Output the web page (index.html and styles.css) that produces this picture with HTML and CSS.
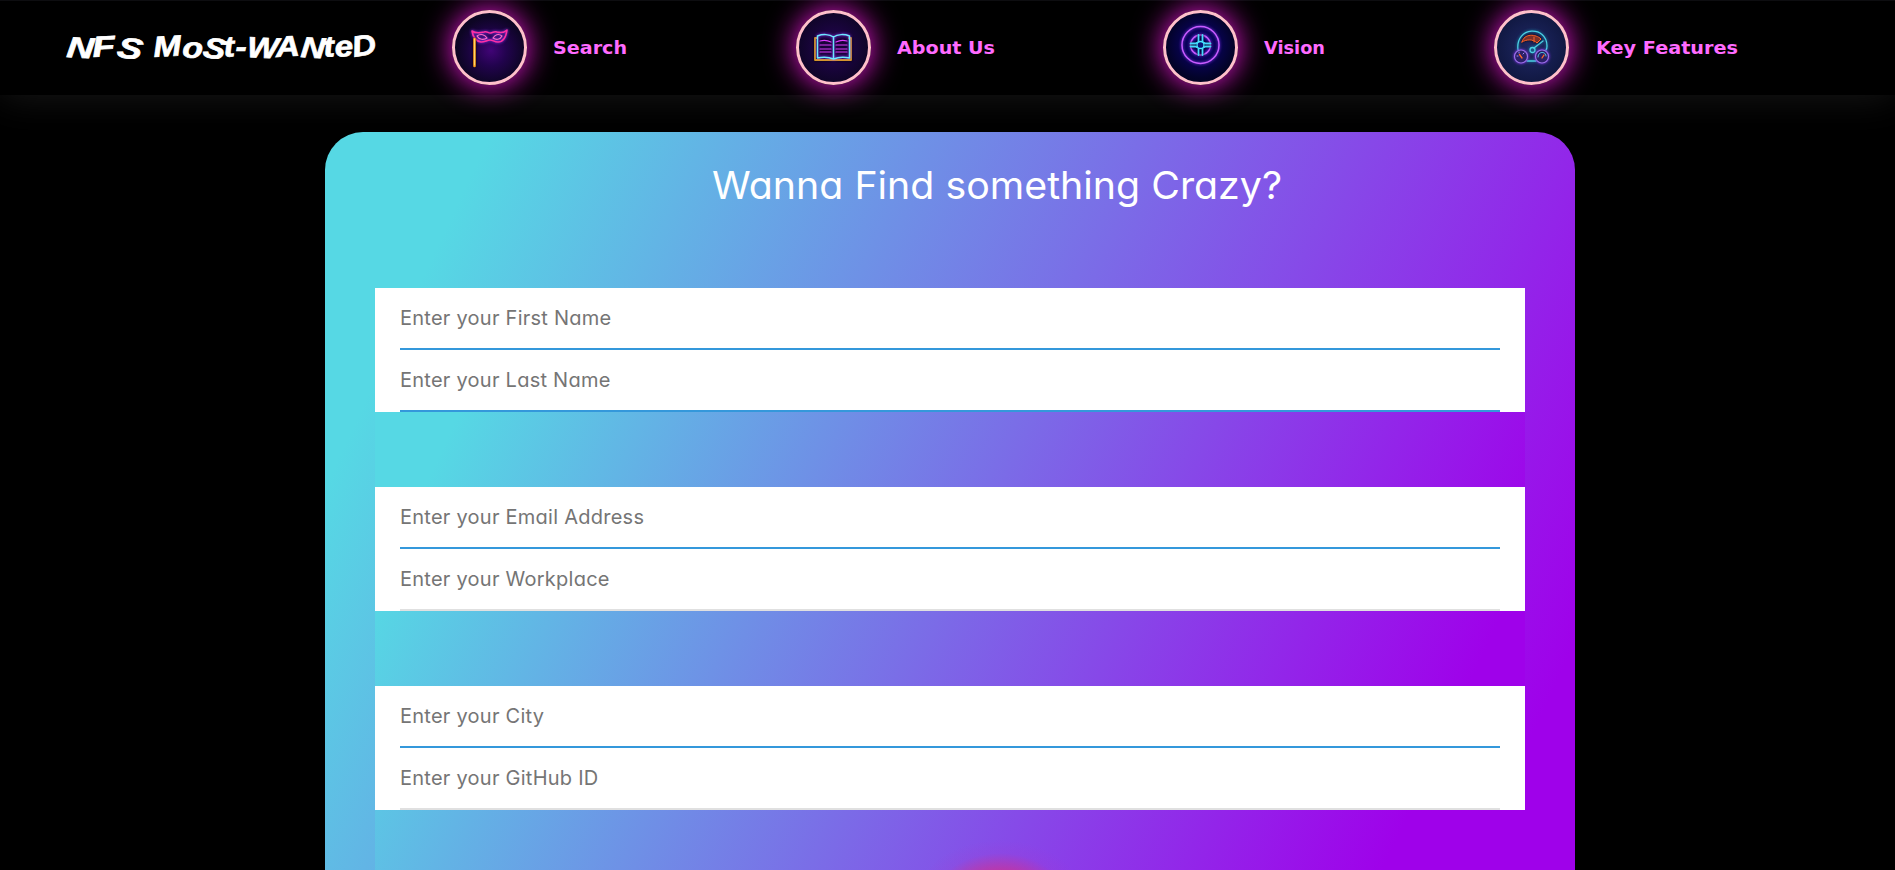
FILE: index.html
```html
<!DOCTYPE html>
<html lang="en">
<head>
<meta charset="utf-8">
<title>NFS Most-Wanted</title>
<link rel="stylesheet" href="styles.css">
</head>
<body>
<header class="navbar">
  <a class="brand">
    <svg width="330" height="95" viewBox="0 0 330 95">
      <text class="brand-text" x="1" y="57" rotate="4 -4 8" textLength="75" lengthAdjust="spacingAndGlyphs">NFS</text>
      <text class="brand-text" x="89" y="57" rotate="-4 5 8 -5 0 3 -4 4 -6 -5 -10" textLength="224" lengthAdjust="spacingAndGlyphs">MoSt-WANteD</text>
    </svg>
  </a>
  <nav class="menu">
    <a class="item search">
      <svg class="disc disc-violet" viewBox="0 0 69 69">
        <g class="neon" stroke="#ff2fa5" stroke-width="1.6">
          <path d="M17 18c4 3 8 2 12 1 3-1 4 1 6 1s4-2 7-1c4 1 7 1 10-2-1 7-3 12-9 12-4 0-5-2-8-2s-5 2-9 2c-6-1-8-5-9-11z"/>
          <path d="M22 23c4-3 8-1 10 2-3 2-8 2-10-2zM47 23c-4-3-7-1-9 2 3 2 7 2 9-2z" stroke="#ff6fc8" stroke-width="1.2"/>
        </g>
        <path class="glow-line" d="M19.500 26v27" stroke="#ff9d20" stroke-width="2.600"/>
        <path d="M19.500 26v26" stroke="#ffe477" stroke-width=".8"/>
      </svg>
      <span class="label"><svg width="76" height="30"><text x="1" y="21" textLength="74" lengthAdjust="spacingAndGlyphs">Search</text></svg></span>
    </a>
    <a class="item about">
      <svg class="disc disc-violet" viewBox="0 0 69 69">
        <path class="glow-line" d="M18 25h-2v22h36V25h-2" stroke="#d99b20" stroke-width="1.800" fill="none"/>
        <g class="neon" stroke="#6cebff" stroke-width="1.500">
          <path d="M34.500 24c-4-3-11-3-16-1v22c5-1 11-1 16 1 5-2 11-2 16-1V23c-5-2-12-2-16 1zV46"/>
        </g>
        <path class="glow-line" d="M21 28c4-1 7-1 11 1M21 32h11M21 36h11M21 39h11M37 29c4-2 7-2 11-1M37 32h11M37 36h11M37 39h11" stroke="#dc3cff" stroke-width="1.2" fill="none"/>
      </svg>
      <span class="label"><svg width="99" height="30"><text x="1" y="21" textLength="98" lengthAdjust="spacingAndGlyphs">About Us</text></svg></span>
    </a>
    <a class="item vision">
      <svg class="disc disc-blue" viewBox="0 0 69 69">
        <g class="neon" stroke="#c95cff" stroke-width="1.500">
          <circle cx="34.500" cy="32" r="18.500"/>
          <circle cx="34.500" cy="32" r="10"/>
        </g>
        <path class="glow-line" d="M32.500 22v7l-3 1.500h-5M36.500 22v7l3 1.500h5M32.500 42v-7l-3-1.500h-5M36.500 42v-7l3-1.500h5" stroke="#43d9ff" stroke-width="1.800" fill="none"/>
        <circle cx="34.500" cy="32" r="3.500" stroke="#48e6ff" stroke-width="1.300" fill="#08167a"/>
      </svg>
      <span class="label"><svg width="63" height="30"><text x="1" y="21" textLength="61" lengthAdjust="spacingAndGlyphs">Vision</text></svg></span>
    </a>
    <a class="item features">
      <svg class="disc disc-navy" viewBox="0 0 69 69">
        <g class="neon-cyan" stroke="#4bd0e2" stroke-width="1.300">
          <path d="M21 37c-3-24 29-25 29-4 0 2 0 3-1 4M30 48h9M37 35l9-7"/>
          <circle cx="35.500" cy="37" r="2.500"/>
        </g>
        <path class="glow-line" d="M25 29c2-9 14-8 19-3l-4 4c-4-4-10-4-15-1zM37 24v5" fill="#7d3029" stroke="#ff6229"/>
        <g class="neon" stroke="#9a70e6" fill="#2a2068" stroke-width="1.200">
          <circle cx="24" cy="43.500" r="6.500"/><circle cx="45" cy="43.500" r="6.500"/>
        </g>
        <path d="M22.500 41.500l2.500 3.500M45 45l2-3" stroke="#ff6829" stroke-width="1.300"/>
        <path d="M41 44c0-6 8-6 8-1" fill="none" stroke="#54c5e5"/>
        <path d="M20 43h1M27 40l-1 1M22 39v1" stroke="#a78bec"/>
      </svg>
      <span class="label"><svg width="145" height="30"><text x="2" y="21" textLength="142" lengthAdjust="spacingAndGlyphs">Key Features</text></svg></span>
    </a>
  </nav>
</header>
<main class="card">
  <h1 class="title"><svg width="600" height="60"><text x="12" y="42" textLength="570" lengthAdjust="spacingAndGlyphs">Wanna Find something Crazy?</text></svg></h1>
  <form class="form">
    <div class="row">
      <input class="field first-name active" placeholder="Enter your First Name">
      <input class="field last-name active" placeholder="Enter your Last Name">
    </div>
    <div class="row">
      <input class="field email active" placeholder="Enter your Email Address">
      <input class="field workplace" placeholder="Enter your Workplace">
    </div>
    <div class="row">
      <input class="field city active" placeholder="Enter your City">
      <input class="field github" placeholder="Enter your GitHub ID">
    </div>
    <div class="submit-area"><span class="submit-glow"></span></div>
  </form>
</main>
</body>
</html>
```
FILE: styles.css
```css
* { box-sizing: border-box; }
html, body { margin: 0; height: 870px; overflow: hidden; background: #000; }
body { font-family: Inter, "Noto Sans", sans-serif; }

.navbar {
  position: relative;
  display: flex;
  height: 95px;
  padding-left: 65px;
  background: #000;
  border-top: 1px solid #0d0d10;
  box-shadow: 0 0 40px rgba(255, 255, 255, .1);
}
.brand { display: block; width: 387px; height: 94px; margin-top: -1px; }
.brand-text {
  fill: #fff;
  stroke: #fff;
  stroke-width: .7px;
  font: italic 700 29px "Liberation Sans", sans-serif;
}
.menu { display: flex; align-items: center; gap: 168px; height: 93px; }
.item { display: flex; align-items: center; gap: 25px; }
.disc {
  display: block;
  width: 75px;
  height: 75px;
  border: 3px solid #ffc0cb;
  border-radius: 50%;
  fill: none;
  stroke-linecap: round;
  stroke-linejoin: round;
  box-shadow: 0 0 30px #f416e4;
}
.disc-violet { background: radial-gradient(circle at 52% 54%, #410477 0, #22034e 30%, #0d0524 65%, #07051a 100%); }
.about .disc { background: radial-gradient(circle, #250451 0, #1b0440 35%, #0d0523 80%); }
.disc-blue { background: radial-gradient(circle at 50% 46%, #09047d 0, #080352 35%, #03032a 65%, #01010e 100%); }
.disc-navy { background: radial-gradient(circle, #202763 0, #151d4d 50%, #0b1233 100%); }
.neon { filter: drop-shadow(0 0 1.5px #9435ff); }
.neon-cyan { filter: drop-shadow(0 0 1.5px #1793b5); }
.glow-line { filter: drop-shadow(0 0 1px currentColor); }
.label svg { display: block; overflow: visible; }
.label text {
  fill: #ff6bff;
  font: 700 17px "DejaVu Sans", sans-serif;
}

.card {
  width: 1250px;
  height: 867px;
  margin: 37px 0 0 325px;
  padding: 25px 50px 0;
  border-radius: 38px;
  background: linear-gradient(115deg, #56d8e4 10%, #9f01ea 90%);
}
.title { height: 131px; margin: 0; padding-left: 325px; }
.title svg { display: block; }
.title text { fill: #fff; font: 400 38px Inter, sans-serif; font-feature-settings: "cv11"; }
.form {
  height: 582px;
  background: linear-gradient(115deg, #56d8e4 10%, #9f01ea 90%);
}
.row { height: 124px; margin-bottom: 75px; padding: 0 25px; background: #fff; }
.row:nth-child(3) { margin-bottom: 0; }
.field {
  display: block;
  width: 100%;
  height: 62px;
  padding: 0;
  border: 0;
  border-bottom: 2px solid #e0e0e0;
  background: transparent;
  font: 400 20px Inter, sans-serif;
  font-feature-settings: "cv11";
  letter-spacing: .25px;
}
.field.active { border-color: #3498db; }
.field::placeholder { color: #757575; opacity: 1; }
.submit-area { display: flex; justify-content: center; height: 60px; padding-left: 100px; }
.submit-glow {
  width: 200px;
  height: 60px;
  background: radial-gradient(ellipse 85px 60px at 50% 90px, #e8285f 0, rgba(222, 43, 128, .65) 45%, rgba(180, 50, 190, .12) 78%, rgba(180, 50, 190, 0) 100%);
}
```
